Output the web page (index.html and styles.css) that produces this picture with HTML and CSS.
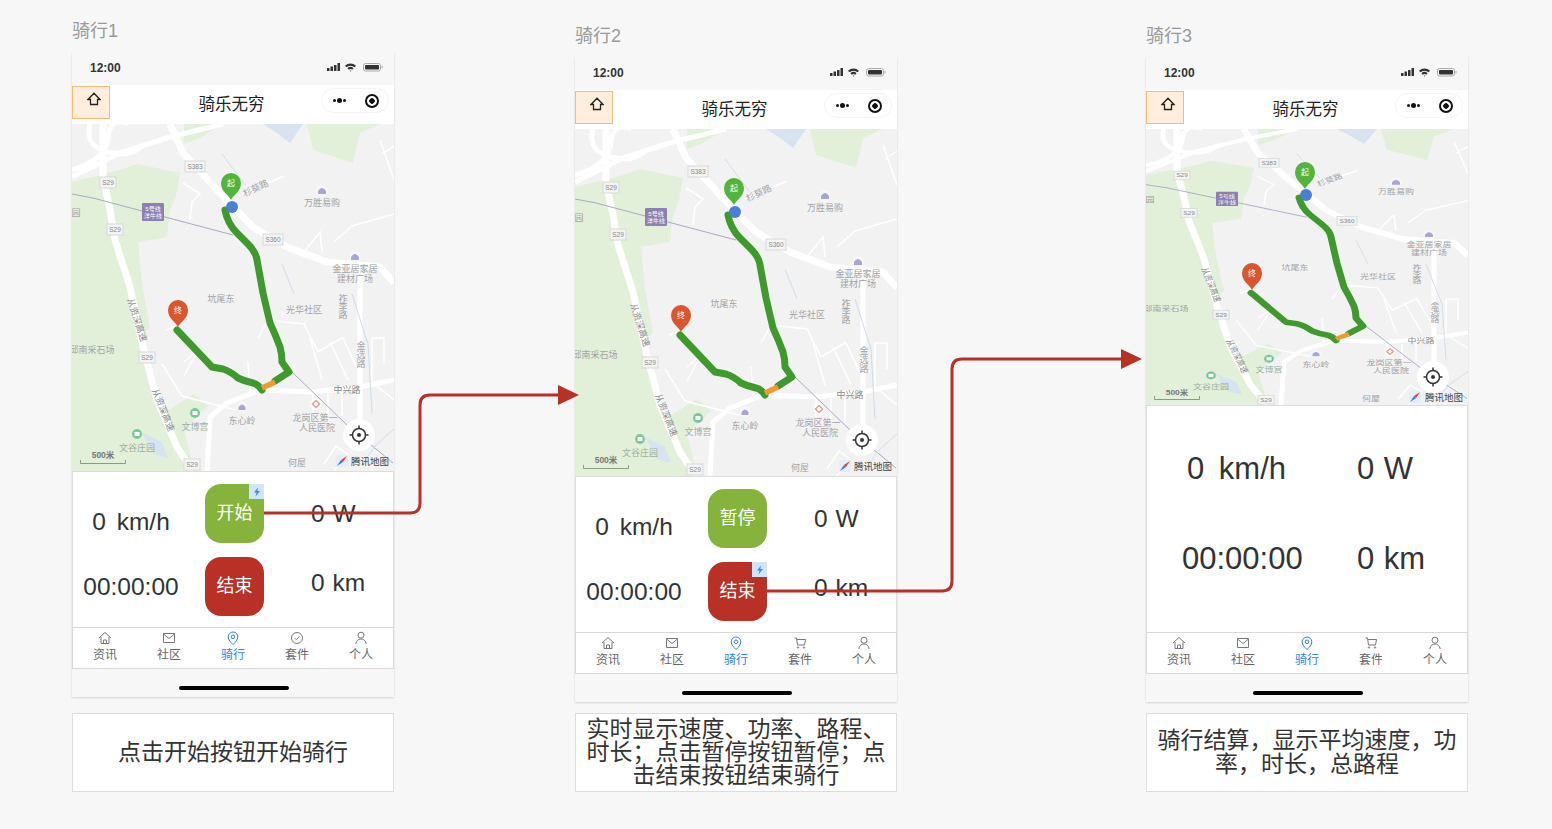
FILE: index.html
```html
<!DOCTYPE html>
<html lang="zh-CN">
<head>
    <meta charset="UTF-8">
    <meta name="viewport" content="width=device-width, initial-scale=1.0">
    <title>骑行流程</title>
    <link rel="stylesheet" href="styles.css">
</head>
<body>

    <!-- shared drawings -->
    <svg class="defs" aria-hidden="true">
        <defs>
            <g id="base-map">
                <rect class="land" width="322" height="347"/>
                <path class="park" d="M0 58 L48 46 L65 40 L108 49 L104 72 L98 86 L95 113 L66 118 L70 160 L78 203 L66 215 L90 290 L122 270 L136 282 L112 305 L122 347 L0 347 Z"/>
                <path class="park" d="M235 0 L241 26 L281 39 L288 9 L308 0 Z"/>
                <path class="park" d="M112 0 L150 0 L128 14 L112 20 Z"/>
                <path class="water" d="M191 0 L231 0 L218 19 L205 9 Z"/>
                <path class="water" d="M70 308 L90 318 L96 334 L82 330 Z"/>
                <path class="road" d="M0 53 L48 29 L98 13 L151 0"/>
                <path class="road" d="M0 46 Q34 36 36 14 T56 0"/>
                <path class="road" d="M18 0 Q12 22 36 28 T72 20"/>
                <path class="road road-main" d="M31 0 L31 53 L38 86 L43 116 L58 163 L71 223 L85 276 L105 323 L121 347"/>
                <path class="road road-main" d="M98 0 L111 29 L145 66 L181 103 L215 123 L255 138 L308 143 L322 159"/>
                <path class="road" d="M322 256 L288 263 L241 268 L188 266 L155 279 L138 293 L135 347"/>
                <path class="road" d="M288 143 L288 296"/>
                <path class="road-thin" d="M111 59 L128 70 L120 78 L118 96"/>
                <path class="road-thin" d="M170 70 L212 52"/>
                <path class="road-thin" d="M250 128 L248 108 L232 128 M262 118 L280 102 L322 90"/>
                <path class="road-thin" d="M322 56 L308 16"/>
                <path class="road-thin" d="M186 214 L196 196 L232 200 L246 228 L270 214 M238 214 L250 256 M258 218 L276 256 M270 212 L288 250"/>
                <path class="road-thin" d="M300 214 L300 258 L322 276 M300 214 L312 214 L312 240"/>
                <path class="road-thin" d="M90 240 L110 272 L164 286 M112 238 L126 226 L112 252"/>
                <path class="road-thin" d="M176 238 L178 268 M241 268 L241 290 M256 270 L256 292 M270 268 L270 292"/>
                <path class="road-thin" d="M252 340 L264 322 L275 330 L262 347"/>
                <path class="road-thin" d="M310 30 L322 22 M94 206 L106 202"/>
                <path class="line" d="M0 70 L21 74 L161 111 M220 248 L275 301 L321 339"/>
                <path class="brook" d="M150 30 L174 62 M210 140 L222 170 M280 170 L296 220 L300 290 M290 340 L305 320 L322 305"/>
                <g class="shield">
                    <rect x="113" y="37" width="20" height="11"/><text x="123" y="45">S383</text>
                    <rect x="28" y="53" width="16" height="11"/><text x="36" y="61">S29</text>
                    <rect x="35" y="100" width="16" height="11"/><text x="43" y="108">S29</text>
                    <rect x="191" y="110" width="20" height="11"/><text x="201" y="118">S360</text>
                    <rect x="67" y="228" width="16" height="11"/><text x="75" y="236">S29</text>
                    <rect x="112" y="335" width="16" height="11"/><text x="120" y="343">S29</text>
                </g>
                <rect class="station" x="70" y="79" width="22" height="18" rx="1"/>
                <text class="station-text" x="81" y="86.5">5号线</text>
                <text class="station-text" x="81" y="94">洋牛线</text>
                <g class="poi-dot">
                    <circle cx="250" cy="67" r="6"/><circle cx="283" cy="133" r="6"/><circle cx="170" cy="283" r="5.5"/>
                </g>
                <g class="poi-mark">
                    <path d="M246 70 V67 Q250 61 254 67 V70 Z"/><path d="M279 136 V133 Q283 127 287 133 V136 Z"/><path d="M166.500 286 V283 Q170 278 173.500 283 V286 Z"/>
                </g>
                <circle class="poi-park" cx="123" cy="289" r="5"/>
                <rect class="poi-park-mark" x="120.500" y="287" width="5" height="4"/>
                <circle class="poi-park" cx="65" cy="310" r="5"/>
                <rect class="poi-park-mark" x="62.500" y="308" width="5" height="4"/>
                <circle class="poi-hospital-bg" cx="244" cy="280" r="5.500"/>
                <rect class="poi-hospital" x="241.500" y="277.500" width="5" height="5" transform="rotate(45 244 280)"/>
                <g class="map-label">
                    <text transform="rotate(-25 185 67)" x="185" y="67">杉葵路</text>
                    <text x="250" y="82">万胜易购</text>
                    <text x="4" y="92">园</text>
                    <text x="283" y="148">金亚居家居</text>
                    <text x="283" y="158">建材广场</text>
                    <text x="271" y="178">祚</text><text x="271" y="186">李</text><text x="271" y="194">路</text>
                    <text x="289" y="225">金</text><text x="289" y="234">选</text><text x="289" y="243">路</text>
                    <text x="149" y="178">坑尾东</text>
                    <text x="232" y="189">光华社区</text>
                    <text x="20" y="229">邱南采石场</text>
                    <text class="label-dark" transform="rotate(72 65 196)" x="65" y="199">从资深高速</text>
                    <text class="label-dark" transform="rotate(68 91 286)" x="91" y="289">从资深高速</text>
                    <text class="label-dark" x="275" y="269">中兴路</text>
                    <text x="243" y="297">龙岗区第一</text>
                    <text x="245" y="307">人民医院</text>
                    <text x="170" y="300">东心岭</text>
                    <text class="label-park" x="123" y="306">文博宫</text>
                    <text class="label-park" x="65" y="327">文谷庄园</text>
                    <text x="225" y="342">何屋</text>
                </g>
                <path class="route" d="M153 86 Q154 92 157 98 Q160 104 165 109 L176 120 Q184 128 185 136 L191 169 L198 199 Q204 212 208 223 Q210 230 210 238 L217 248 L203 257"/>
                <path class="route" d="M190 266 Q186 260 181 259 Q172 257 166 254 Q158 247 151 245 L140 243 L105 206"/>
                <path class="route-slow" d="M203 258 L190 264"/>
                <text class="scale-text" x="31" y="334">500米</text>
            </g>

            <g id="pin-start">
                <path class="pin-green" d="M0 0 C-2 -5 -10 -8 -10 -17 A10 10 0 0 1 10 -17 C10 -8 2 -5 0 0 Z"/>
                <text class="pin-text" x="0" y="-14">起</text>
            </g>
            <g id="pin-end">
                <path class="pin-red" d="M0 0 C-2 -5 -10 -8 -10 -17 A10 10 0 0 1 10 -17 C10 -8 2 -5 0 0 Z"/>
                <text class="pin-text" x="0" y="-14">终</text>
            </g>
            <g id="locate">
                <circle class="locate-bg" r="16"/>
                <circle class="locate-ring" r="6.500"/>
                <circle class="locate-dot" r="2"/>
                <path class="locate-ring" d="M0 -9.500 V-6.500 M0 9.500 V6.500 M-9.500 0 H-6.500 M9.500 0 H6.500"/>
            </g>
            <g id="map-mark">
                <rect class="mark-bg" x="-6" y="-6" width="12" height="12" rx="2"/>
                <path class="mark-red" d="M5 -5 L-1 -1 L1 1 Z"/>
                <path class="mark-blue" d="M-5 5 L-1 -1 L1 1 Z"/>
            </g>
            <g id="scale-bar">
                <path class="scale-line" d="M8.500 336 V339.500 H53.500 V336"/>
            </g>

            <symbol id="i-nav-home" viewBox="0 0 14 14"><path d="M7 1.200 L13 7.500 H10.500 V12.500 H3.500 V7.500 H1 Z"/></symbol>
            <symbol id="i-home" viewBox="0 0 14 14"><path d="M1 7 L7 1.500 L13 7 M3 6 V12.500 H11 V6 M5.500 12.500 V9 H8.500 V12.500"/></symbol>
            <symbol id="i-mail" viewBox="0 0 14 14"><path d="M1.500 2.500 H12.500 V11.500 H1.500 Z M1.500 3 L7 7.500 L12.500 3"/></symbol>
            <symbol id="i-pin" viewBox="0 0 14 14"><path d="M7 13.500 C4.500 11 2.200 9 2.200 5.800 A4.800 4.800 0 0 1 11.800 5.800 C11.800 9 9.500 11 7 13.500 Z"/><circle cx="7" cy="5.800" r="1.800"/></symbol>
            <symbol id="i-check" viewBox="0 0 14 14"><circle cx="7" cy="7" r="5.500"/><path d="M4.800 7.200 L6.400 8.800 L9.400 5.400"/></symbol>
            <symbol id="i-cart" viewBox="0 0 14 14"><path d="M1.500 2 H3.500 L4.500 9 H11.500 L12.500 3.500 H3.800"/><circle cx="5" cy="11.500" r=".7"/><circle cx="11" cy="11.500" r=".7"/></symbol>
            <symbol id="i-user" viewBox="0 0 14 14"><circle cx="7" cy="4.200" r="3"/><path d="M1.800 13 C2.200 9.500 4.500 8 7 8 C9.500 8 11.800 9.500 12.200 13"/></symbol>
            <symbol id="i-status" viewBox="0 0 56 11">
                <rect x="0" y="6" width="2.500" height="3"/><rect x="3.500" y="4.500" width="2.500" height="4.500"/><rect x="7" y="3" width="2.500" height="6"/><rect x="10.500" y="1" width="2.500" height="8"/>
                <path d="M18 3.800 A8 8 0 0 1 29 3.800 L27.600 5.300 A6 6 0 0 0 19.400 5.300 Z M20.400 6.300 A4.500 4.500 0 0 1 26.600 6.300 L25.200 7.800 A2.500 2.500 0 0 0 21.800 7.800 Z M22.700 8.800 A1.300 1.300 0 0 1 24.300 8.800 L23.500 9.800 Z"/>
                <rect class="battery-case" x="36.500" y="1.500" width="17" height="7.500" rx="2"/>
                <rect x="38" y="3" width="14" height="4.500" rx="1"/>
                <rect class="battery-tip" x="54.500" y="4" width="1" height="2.500"/>
            </symbol>
        </defs>
    </svg>

    <div class="board">

        <section class="flow flow-one">
            <h2 class="flow-title">骑行1</h2>
            <div class="phone">
                <div class="status-bar">
                    <span class="clock">12:00</span>
                    <svg class="status-icons"><use href="#i-status"/></svg>
                </div>
                <div class="nav-bar">
                    <div class="home-box"><svg class="nav-home"><use href="#i-nav-home"/></svg></div>
                    <div class="nav-title">骑乐无穷</div>
                    <div class="capsule">
                        <span class="capsule-dots"><i></i><b></b><i></i></span>
                        <span class="capsule-target"></span>
                    </div>
                </div>
                <svg class="map" viewBox="0 0 322 347">
                    <use href="#base-map"/>
                    <use href="#scale-bar"/>
                    <use href="#pin-start" x="159" y="76"/>
                    <circle class="start-dot" cx="160" cy="83" r="6"/>
                    <use href="#pin-end" x="106" y="203"/>
                    <use href="#locate" x="287" y="311"/>
                    <use href="#map-mark" x="270" y="337"/>
                    <text class="map-brand" x="279" y="341">腾讯地图</text>
                </svg>
                <div class="panel">
                    <div class="stat stat-left stat-low">0 km/h</div>
                    <button class="ride-btn btn-green">开始<span class="badge"><svg viewBox="0 0 10 10"><path d="M6 0.500 L2 5.500 H4.500 L3.500 9.500 L8 4 H5.300 Z"/></svg></span></button>
                    <div class="stat stat-right">0 W</div>
                    <div class="stat stat-left">00:00:00</div>
                    <button class="ride-btn btn-red">结束</button>
                    <div class="stat stat-right stat-high">0 km</div>
                </div>
                <nav class="tabs">
                    <div class="tab"><svg><use href="#i-home"/></svg><span>资讯</span></div>
                    <div class="tab"><svg><use href="#i-mail"/></svg><span>社区</span></div>
                    <div class="tab tab-active"><svg><use href="#i-pin"/></svg><span>骑行</span></div>
                    <div class="tab"><svg><use href="#i-check"/></svg><span>套件</span></div>
                    <div class="tab"><svg><use href="#i-user"/></svg><span>个人</span></div>
                </nav>
                <div class="home-bar"><span></span></div>
            </div>
            <p class="caption">点击开始按钮开始骑行</p>
        </section>

        <section class="flow flow-two">
            <h2 class="flow-title">骑行2</h2>
            <div class="phone">
                <div class="status-bar">
                    <span class="clock">12:00</span>
                    <svg class="status-icons"><use href="#i-status"/></svg>
                </div>
                <div class="nav-bar">
                    <div class="home-box"><svg class="nav-home"><use href="#i-nav-home"/></svg></div>
                    <div class="nav-title">骑乐无穷</div>
                    <div class="capsule">
                        <span class="capsule-dots"><i></i><b></b><i></i></span>
                        <span class="capsule-target"></span>
                    </div>
                </div>
                <svg class="map" viewBox="0 0 322 347">
                    <use href="#base-map"/>
                    <use href="#scale-bar"/>
                    <use href="#pin-start" x="159" y="76"/>
                    <circle class="start-dot" cx="160" cy="83" r="6"/>
                    <use href="#pin-end" x="106" y="203"/>
                    <use href="#locate" x="287" y="311"/>
                    <use href="#map-mark" x="270" y="337"/>
                    <text class="map-brand" x="279" y="341">腾讯地图</text>
                </svg>
                <div class="panel">
                    <div class="stat stat-left stat-low">0 km/h</div>
                    <button class="ride-btn btn-green">暂停</button>
                    <div class="stat stat-right">0 W</div>
                    <div class="stat stat-left">00:00:00</div>
                    <button class="ride-btn btn-red">结束<span class="badge"><svg viewBox="0 0 10 10"><path d="M6 0.500 L2 5.500 H4.500 L3.500 9.500 L8 4 H5.300 Z"/></svg></span></button>
                    <div class="stat stat-right stat-high">0 km</div>
                </div>
                <nav class="tabs">
                    <div class="tab"><svg><use href="#i-home"/></svg><span>资讯</span></div>
                    <div class="tab"><svg><use href="#i-mail"/></svg><span>社区</span></div>
                    <div class="tab tab-active"><svg><use href="#i-pin"/></svg><span>骑行</span></div>
                    <div class="tab"><svg><use href="#i-cart"/></svg><span>套件</span></div>
                    <div class="tab"><svg><use href="#i-user"/></svg><span>个人</span></div>
                </nav>
                <div class="home-bar"><span></span></div>
            </div>
            <p class="caption">实时显示速度、功率、路程、时长；点击暂停按钮暂停；点击结束按钮结束骑行</p>
        </section>

        <section class="flow flow-three">
            <h2 class="flow-title">骑行3</h2>
            <div class="phone">
                <div class="status-bar">
                    <span class="clock">12:00</span>
                    <svg class="status-icons"><use href="#i-status"/></svg>
                </div>
                <div class="nav-bar">
                    <div class="home-box"><svg class="nav-home"><use href="#i-nav-home"/></svg></div>
                    <div class="nav-title">骑乐无穷</div>
                    <div class="capsule">
                        <span class="capsule-dots"><i></i><b></b><i></i></span>
                        <span class="capsule-target"></span>
                    </div>
                </div>
                <svg class="map map-short" viewBox="0 0 322 276">
                    <g transform="scale(1 .795)">
                        <use href="#base-map"/>
                    </g>
                    <use href="#scale-bar" y="-69"/>
                    <use href="#pin-start" x="159" y="60"/>
                    <circle class="start-dot" cx="160" cy="66" r="6"/>
                    <use href="#pin-end" x="106" y="161"/>
                    <use href="#locate" x="287" y="248"/>
                    <use href="#map-mark" x="269" y="268"/>
                    <text class="map-brand" x="279" y="272">腾讯地图</text>
                </svg>
                <div class="panel panel-summary">
                    <div class="summary summary-speed">0 km/h</div>
                    <div class="summary">0 W</div>
                    <div class="summary summary-time">00:00:00</div>
                    <div class="summary">0 km</div>
                </div>
                <nav class="tabs">
                    <div class="tab"><svg><use href="#i-home"/></svg><span>资讯</span></div>
                    <div class="tab"><svg><use href="#i-mail"/></svg><span>社区</span></div>
                    <div class="tab tab-active"><svg><use href="#i-pin"/></svg><span>骑行</span></div>
                    <div class="tab"><svg><use href="#i-cart"/></svg><span>套件</span></div>
                    <div class="tab"><svg><use href="#i-user"/></svg><span>个人</span></div>
                </nav>
                <div class="home-bar"><span></span></div>
            </div>
            <p class="caption">骑行结算，显示平均速度，功率，时长，总路程</p>
        </section>

        <!-- flow arrows lie over the screens -->
        <svg class="arrows" viewBox="0 0 1552 829">
            <path class="arrow-line" d="M264 513 H410 Q420 513 420 503 V405 Q420 395 430 395 H560"/>
            <path class="arrow-head" d="M558 385 L579 395 L558 405 Z"/>
            <path class="arrow-line" d="M767 591 H942 Q952 591 952 581 V369 Q952 359 962 359 H1123"/>
            <path class="arrow-head" d="M1121 349 L1142 359 L1121 369 Z"/>
        </svg>
    </div>

</body>
</html>
```

FILE: styles.css
```css
* { box-sizing: border-box; }
body { margin: 0; background: #f7f7f7; color: #333; font-family: "Liberation Sans", "Noto Sans CJK SC", sans-serif; overflow: hidden; }
.defs { position: absolute; width: 0; height: 0; }
.board { position: relative; display: flex; height: 829px; padding-left: 72px; }

.flow { width: 322px; flex: none; }
.flow-one { padding-top: 20px; }
.flow-two { padding-top: 25px; margin-left: 181px; }
.flow-three { padding-top: 25px; margin-left: 249px; }
.flow-title { margin: 0 0 9px; height: 23px; font-size: 18px; line-height: 23px; font-weight: 400; color: #999; }

.phone { width: 322px; height: 645px; display: flex; flex-direction: column; background: #f7f7f7; box-shadow: 0 1px 2px rgba(0, 0, 0, .15); }

.status-bar { height: 33px; flex: none; display: flex; justify-content: space-between; align-items: center; padding: 0 11px 2px 18px; }
.clock { font-size: 12px; font-weight: 700; color: #333; }
.status-icons { width: 56px; height: 11px; fill: #333; }
.battery-case { fill: none; stroke: #aaa; stroke-width: 1; }
.battery-tip { fill: #aaa; }

.nav-bar { height: 39px; flex: none; position: relative; display: flex; justify-content: center; background: #fff; }
.home-box { position: absolute; left: 0; top: 1px; width: 38px; height: 33px; display: flex; justify-content: center; align-items: center; padding: 0 0 7px 6px; background: #ffeedd; border: 1px solid #f9b877; }
.nav-home { width: 14px; height: 14px; fill: none; stroke: #222; stroke-width: 1.3; }
.nav-title { margin-right: 3px; font-size: 16.500px; line-height: 38px; color: #222; }
.capsule { position: absolute; left: 249px; top: 3px; width: 68px; height: 25px; display: flex; align-items: center; justify-content: space-between; padding: 0 9px 0 11px; border: 1px solid #f4f4f4; border-radius: 13px; }
.capsule-dots { display: flex; align-items: center; gap: 1px; }
.capsule-dots i { width: 3px; height: 3px; border-radius: 50%; background: #111; }
.capsule-dots b { width: 5px; height: 5px; border-radius: 50%; background: #111; }
.capsule-target { width: 14px; height: 14px; border-radius: 50%; border: 2px solid #111; background: radial-gradient(circle, #111 0 2.500px, #fff 3px); }

.map { display: block; width: 322px; height: 347px; flex: none; }
.map-short { height: 276px; }
.land { fill: #f2f2f2; }
.park { fill: #e2efd9; }
.water { fill: #d7e3f0; }
.road { fill: none; stroke: #fff; stroke-width: 5; stroke-linejoin: round; }
.road-main { stroke-width: 7; }
.road-thin { fill: none; stroke: #fff; stroke-width: 1.500; }
.line { fill: none; stroke: #a9a9c4; stroke-width: 1; }
.brook { fill: none; stroke: #cfdcec; stroke-width: 1; }
.shield rect { fill: #f4f4f4; stroke: #d8d8d8; stroke-width: 1; }
.shield text { font-size: 6.500px; fill: #888; text-anchor: middle; }
.station { fill: #8d7fb0; }
.station-text { font-size: 6px; fill: #fff; text-anchor: middle; }
.poi-dot circle { fill: #f7f7fb; }
.poi-mark path { fill: #a9a6d6; }
.poi-park { fill: #7cc79a; }
.poi-park-mark { fill: #fff; }
.poi-hospital-bg { fill: #fff; }
.poi-hospital { fill: #fff; stroke: #e8a090; stroke-width: 1.500; }
.map-label text { font-size: 9px; fill: #a2a2a8; text-anchor: middle; }
.map-label .label-dark { fill: #8a8a8a; }
.map-label .label-park { fill: #9cb0a0; }
.route { fill: none; stroke: #3f9a2e; stroke-width: 7; stroke-linejoin: round; stroke-linecap: round; }
.route-slow { fill: none; stroke: #ee9b2f; stroke-width: 5.500; }
.scale-text { font-size: 8.500px; font-weight: 700; fill: #777; text-anchor: middle; }
.scale-line { fill: none; stroke: #8c9a80; stroke-width: 1; }
.pin-green { fill: #52b43c; }
.pin-red { fill: #d9562f; }
.pin-text { font-size: 8px; fill: #fff; text-anchor: middle; }
.start-dot { fill: #4a7fd4; }
.locate-bg { fill: #fff; }
.locate-ring { fill: none; stroke: #333; stroke-width: 1.500; }
.locate-dot { fill: #333; }
.mark-bg { fill: #e6edf8; }
.mark-red { fill: #e0452f; }
.mark-blue { fill: #3a78e0; }
.map-brand { font-size: 9.500px; fill: #444; }

.panel { height: 156px; flex: none; display: grid; grid-template-columns: 117px 59px 1fr; grid-template-rows: 59px 59px; column-gap: 15px; row-gap: 14px; padding-top: 12px; background: #fff; border: 1px solid #ddd; border-bottom: 0; }
.stat { display: flex; align-items: center; font-size: 24.500px; word-spacing: 1px; color: #333; }
.stat-left { justify-content: center; margin-right: 1px; }
.stat-low { padding-top: 17px; word-spacing: 4px; }
.stat-right { padding-left: 32px; }
.stat-high { padding-bottom: 8px; }
.ride-btn { position: relative; width: 59px; height: 59px; padding: 0 0 5px; border: 0; border-radius: 16px; font-family: inherit; font-size: 18px; color: #fff; }
.btn-green { background: #85b33c; }
.btn-red { background: #b93026; }
.badge { position: absolute; right: 0; top: 0; width: 15px; height: 15px; display: flex; justify-content: center; align-items: center; background: #cfe5fb; }
.badge svg { width: 10px; height: 10px; fill: #3d8bf0; }

.panel-summary { height: 227px; grid-template-columns: 210px 1fr; grid-template-rows: 90px 90px; column-gap: 0; row-gap: 0; padding-top: 18px; }
.summary { display: flex; align-items: center; font-size: 31px; word-spacing: 1px; color: #333; }
.summary-speed { padding-left: 40px; word-spacing: 6px; }
.summary-time { padding-left: 35px; }

.tabs { height: 42px; flex: none; display: flex; background: #fff; border: 1px solid #d8d8d8; }
.tab { flex: 1; display: flex; flex-direction: column; align-items: center; gap: 2px; padding-top: 3px; font-size: 12px; line-height: 16px; color: #666; }
.tab svg { width: 14px; height: 14px; fill: none; stroke: #777; stroke-width: 1; }
.tab-active { color: #2f7ff0; }
.tab-active svg { stroke: #2f7ff0; }

.home-bar { height: 28px; flex: none; display: flex; justify-content: center; padding: 17px 0 0 2px; }
.home-bar span { width: 110px; height: 4px; border-radius: 2px; background: #000; }

.caption { height: 79px; margin: 0; padding: 0 10px; display: flex; align-items: center; justify-content: center; text-align: center; font-size: 23px; line-height: 23.300px; color: #333; background: #fff; border: 1px solid #ddd; }
.flow-one .caption { margin-top: 16px; }
.flow-two .caption, .flow-three .caption { margin-top: 11px; }

.arrows { position: absolute; left: 0; top: 0; width: 1552px; height: 829px; pointer-events: none; }
.arrow-line { fill: none; stroke: #b93026; stroke-width: 3; }
.arrow-head { fill: #b93026; }
```
